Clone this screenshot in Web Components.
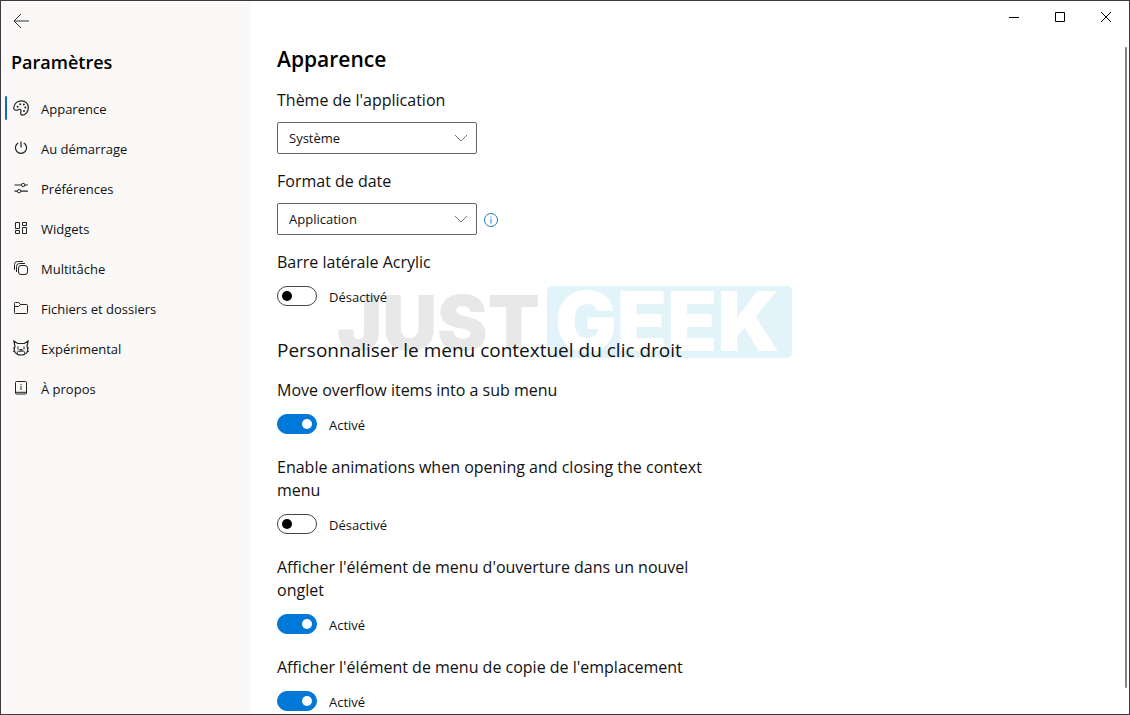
<!DOCTYPE html>
<html lang="fr">
<head>
<meta charset="utf-8">
<title>Paramètres</title>
<style>
    html, body { height: 100%; margin: 0; }
    body { font-family: "Open Sans", "Noto Sans", sans-serif; font-size: 13px; color: #111; overflow: hidden; }
</style>
</head>
<body>
<settings-window>
    <side-nav slot="nav" heading="Paramètres">
        <nav-item icon="palette" active>Apparence</nav-item>
        <nav-item icon="power">Au démarrage</nav-item>
        <nav-item icon="sliders">Préférences</nav-item>
        <nav-item icon="widgets">Widgets</nav-item>
        <nav-item icon="tabs">Multitâche</nav-item>
        <nav-item icon="folder">Fichiers et dossiers</nav-item>
        <nav-item icon="cat">Expérimental</nav-item>
        <nav-item icon="about">À propos</nav-item>
    </side-nav>

    <settings-page heading="Apparence">
        <brand-mark slot="mark"></brand-mark>
        <select-setting label="Thème de l'application" options="Système,Clair,Sombre"></select-setting>
        <select-setting label="Format de date" options="Application,Système" info></select-setting>
        <toggle-setting label="Barre latérale Acrylic"></toggle-setting>
        <section-title>Personnaliser le menu contextuel du clic droit</section-title>
        <toggle-setting label="Move overflow items into a sub menu" checked></toggle-setting>
        <toggle-setting label="Enable animations when opening and closing the context menu"></toggle-setting>
        <toggle-setting label="Afficher l'élément de menu d'ouverture dans un nouvel onglet" checked></toggle-setting>
        <toggle-setting label="Afficher l'élément de menu de copie de l'emplacement" checked></toggle-setting>
    </settings-page>
</settings-window>

<script>
    const ICONS = {
        palette: `<path stroke-width="1.2" d="M.8 7.600C1.400 3.200 4.800.8 8.400.8c4 0 6.900 2.800 6.900 6.700 0 4.300-2.700 7.700-5.600 7.700-1.600 0-2.300-1.100-2-2.400.4-1.500.7-3-.6-3.500-1.200-.4-1.800.7-3.100.9C1.700 10.500.6 9.300.8 7.600z"/><g fill="currentColor" stroke="none"><circle cx="4.600" cy="6.700" r="1"/><circle cx="7.200" cy="4.200" r="1"/><circle cx="10.800" cy="4.500" r="1"/><circle cx="12.300" cy="7.600" r="1"/><circle cx="11" cy="11" r="1"/></g>`,
        power: `<path stroke-width="1.2" d="M8 1.500v6M5.200 2.900a5.600 5.600 0 1 0 5.600 0"/>`,
        sliders: `<path stroke-width="1.2" d="M1.500 5h6.800M12 5h2.800M1.500 11.200h2.700M8 11.200h6.800"/><circle cx="10.200" cy="5" r="1.700"/><circle cx="6.100" cy="11.200" r="1.700"/>`,
        widgets: `<path d="M2.500 2.500h4v6h-4zM9.500 2.500h4v3h-4zM9.500 7.500h4v6h-4zM2.500 10.500h4v3h-4z"/>`,
        tabs: `<rect x="5.500" y="5.500" width="9" height="9" rx="2.500"/><path d="M3.500 12V6.500a3 3 0 0 1 3-3H12M1.500 10V4.500a3 3 0 0 1 3-3H10"/>`,
        folder: `<path d="M1.500 12.500v-9a1 1 0 0 1 1-1h3.200l1.800 2h6a1 1 0 0 1 1 1v7a1 1 0 0 1-1 1h-11a1 1 0 0 1-1-1zM1.500 6.500h4l2-2"/>`,
        cat: `<path stroke-width="1.200" d="M2 6.500.900 1l3.800 2.500h6.600L15.100 1 14 6.500c.9 1.800.9 4 0 5.700-1.200 2-3.200 2.800-6 2.800s-4.800-.8-6-2.800c-.9-1.700-.9-3.900 0-5.700zM0 8h2M.200 11.500h2M14 8h2M13.800 11.500h2"/><path d="M5 6.500v3M11 6.500v3M4.500 13.500v-1.300c0-.7.400-1 1-1h5c.6 0 1 .3 1 1v1.300"/><path stroke-width="1.500" d="M6.500 9.800h3"/>`,
        about: `<rect x="2.500" y="1.500" width="11" height="12.500" rx="1"/><path d="M2.500 12.300h11M8 6v4M8 4v1"/>`,
        info: `<circle cx="8" cy="8" r="6.500"/><path d="M8 7v4.500M8 4.500v1.200"/>`
    };

    function icon(name) {
        return `<svg viewBox="0 0 16 16" width="16" height="16" fill="none" stroke="currentColor" aria-hidden="true">${ICONS[name]}</svg>`;
    }

    class SettingsWindow extends HTMLElement {
        constructor() {
            super();
            this.attachShadow({ mode: 'open' }).innerHTML = `
                <style>
                    :host { display: flex; box-sizing: border-box; height: 100vh; border: 1px solid #3c3a40; background: #fff; overflow: hidden; }
                    .main { flex: 1; min-width: 0; display: flex; flex-direction: column; }
                    .bar { flex: none; display: flex; justify-content: flex-end; height: 32px; }
                    button { width: 46px; height: 32px; padding: 0; border: 0; background: none; color: #000; display: grid; place-items: center; }
                    .view { flex: 1; min-height: 0; display: flex; }
                    .content { flex: 1; min-width: 0; overflow: hidden; }
                    .thumb { flex: none; width: 2px; margin: 14px 2px 26px 0; background: #828282; border-radius: 1px; }
                </style>
                <slot name="nav"></slot>
                <div class="main">
                    <div class="bar">
                        <button aria-label="Réduire"><svg width="10" height="10" stroke="currentColor"><path d="M0 5.500h10"/></svg></button>
                        <button aria-label="Agrandir"><svg width="10" height="10" fill="none" stroke="currentColor"><path d="M.5.5h9v9h-9z"/></svg></button>
                        <button aria-label="Fermer"><svg width="10" height="10" stroke="currentColor"><path d="M0 0l10 10M10 0L0 10"/></svg></button>
                    </div>
                    <div class="view">
                        <div class="content"><slot></slot></div>
                        <div class="thumb"></div>
                    </div>
                </div>
            `;
        }
    }
    customElements.define('settings-window', SettingsWindow);

    class SideNav extends HTMLElement {
        constructor() {
            super();
            this.attachShadow({ mode: 'open' }).innerHTML = `
                <style>
                    :host { display: block; flex: none; width: 249px; background: #faf9f8; }
                    button { display: grid; place-items: center; width: 40px; height: 40px; padding: 0; border: 0; background: none; color: #333; }
                    h1 { margin: 5px 10px 11px; font-size: 18px; line-height: 32px; font-weight: 600; color: #000; }
                </style>
                <button aria-label="Retour">
                    <svg width="16" height="16" fill="none" stroke="currentColor"><path d="M16 8H1M8 1L1 8l7 7"/></svg>
                </button>
                <h1>${this.getAttribute('heading')}</h1>
                <nav><slot></slot></nav>
            `;
        }
    }
    customElements.define('side-nav', SideNav);

    class NavItem extends HTMLElement {
        constructor() {
            super();
            this.attachShadow({ mode: 'open' }).innerHTML = `
                <style>
                    :host { display: block; }
                    a { display: flex; align-items: center; height: 40px; padding-left: 4px; color: inherit; text-decoration: none; }
                    a::before { content: ""; width: 2px; height: 24px; margin: 0 6px 2px 0; border-radius: 1px; }
                    :host([active]) a::before { background: #0f6cbd; }
                    svg { margin: 0 12px 2px 0; color: #222; }
                </style>
                <a href="#" ${this.hasAttribute('active') ? 'aria-current="page"' : ''}>${icon(this.getAttribute('icon'))}<span><slot></slot></span></a>
            `;
        }
    }
    customElements.define('nav-item', NavItem);

    class SettingsPage extends HTMLElement {
        constructor() {
            super();
            this.attachShadow({ mode: 'open' }).innerHTML = `
                <style>
                    :host { display: block; position: relative; padding: 12px 27px; }
                    .list { position: relative; display: flex; flex-direction: column; gap: 16px; max-width: 440px; }
                    h2 { margin: 0; font-size: 21px; line-height: 28px; font-weight: 600; color: #000; }
                </style>
                <slot name="mark"></slot>
                <div class="list">
                    <h2>${this.getAttribute('heading')}</h2>
                    <slot></slot>
                </div>
            `;
        }
    }
    customElements.define('settings-page', SettingsPage);

    class SectionTitle extends HTMLElement {
        constructor() {
            super();
            this.attachShadow({ mode: 'open' }).innerHTML = `
                <style>
                    :host { display: block; margin-top: 10px; }
                    h3 { margin: 0; font-size: 19px; line-height: 25px; font-weight: 400; }
                </style>
                <h3><slot></slot></h3>
            `;
        }
    }
    customElements.define('section-title', SectionTitle);

    class SelectSetting extends HTMLElement {
        constructor() {
            super();
            const options = this.getAttribute('options').split(',');
            this.attachShadow({ mode: 'open' }).innerHTML = `
                <style>
                    :host { display: flex; flex-direction: column; gap: 10px; }
                    label { font-size: 16px; line-height: 23px; }
                    .row { display: flex; align-items: center; gap: 6px; }
                    .box { display: grid; align-items: center; width: 200px; }
                    .box > * { grid-area: 1 / 1; }
                    select { appearance: none; width: 100%; height: 32px; margin: 0; padding: 0 32px 0 11px; border: 1px solid #666; border-radius: 2px; background: #fff; color: inherit; font: inherit; }
                    .arrow { justify-self: end; margin-right: 9px; color: #777; pointer-events: none; }
                    .info { display: flex; padding: 2px 0 0; border: 0; background: none; color: #1a7dc0; }
                </style>
                <label for="choice">${this.getAttribute('label')}</label>
                <div class="row">
                    <div class="box">
                        <select id="choice">${options.map(o => `<option>${o}</option>`).join('')}</select>
                        <svg class="arrow" width="14" height="8" fill="none" stroke="currentColor"><path d="M1 1l6 6 6-6"/></svg>
                    </div>
                    ${this.hasAttribute('info') ? `<button class="info" aria-label="Informations">${icon('info')}</button>` : ''}
                </div>
            `;
        }
    }
    customElements.define('select-setting', SelectSetting);

    class ToggleSetting extends HTMLElement {
        constructor() {
            super();
            this.attachShadow({ mode: 'open' }).innerHTML = `
                <style>
                    :host { display: flex; flex-direction: column; gap: 10px; padding-bottom: 4px; }
                    label { font-size: 16px; line-height: 23px; }
                    .row { display: flex; align-items: center; gap: 12px; height: 24px; }
                    .row span { padding-top: 2px; }
                    input { appearance: none; box-sizing: border-box; display: flex; align-items: center; width: 40px; height: 20px; margin: 0; padding: 0 4px; border: 1px solid #444; border-radius: 10px; background: #fff; }
                    input::before { content: ""; width: 10px; height: 10px; border-radius: 50%; background: #000; }
                    input:checked { justify-content: flex-end; border-color: #0078d7; background: #0078d7; }
                    input:checked::before { background: #fff; }
                </style>
                <label for="switch">${this.getAttribute('label')}</label>
                <div class="row">
                    <input id="switch" type="checkbox" role="switch" ${this.hasAttribute('checked') ? 'checked' : ''}>
                    <span></span>
                </div>
            `;
            this.input = this.shadowRoot.querySelector('input');
            this.input.addEventListener('change', () => this.update());
            this.update();
        }

        update() {
            this.shadowRoot.querySelector('span').textContent = this.input.checked ? 'Activé' : 'Désactivé';
        }
    }
    customElements.define('toggle-setting', ToggleSetting);

    // Logo printed behind the list
    class BrandMark extends HTMLElement {
        constructor() {
            super();
            this.attachShadow({ mode: 'open' }).innerHTML = `
                <style>
                    :host { position: absolute; left: 87px; top: 253px; display: flex; gap: 7px; font: 900 76px/72px Inter, sans-serif; }
                    .just { color: #e8e8e8; }
                    .geek { padding: 0 12px 0 8px; border-radius: 5px; background: #e2f3fa; color: #fff; font-size: 82px; }
                </style>
                <span class="just">JUST</span><span class="geek">GEEK</span>
            `;
        }
    }
    customElements.define('brand-mark', BrandMark);
</script>
</body>
</html>
